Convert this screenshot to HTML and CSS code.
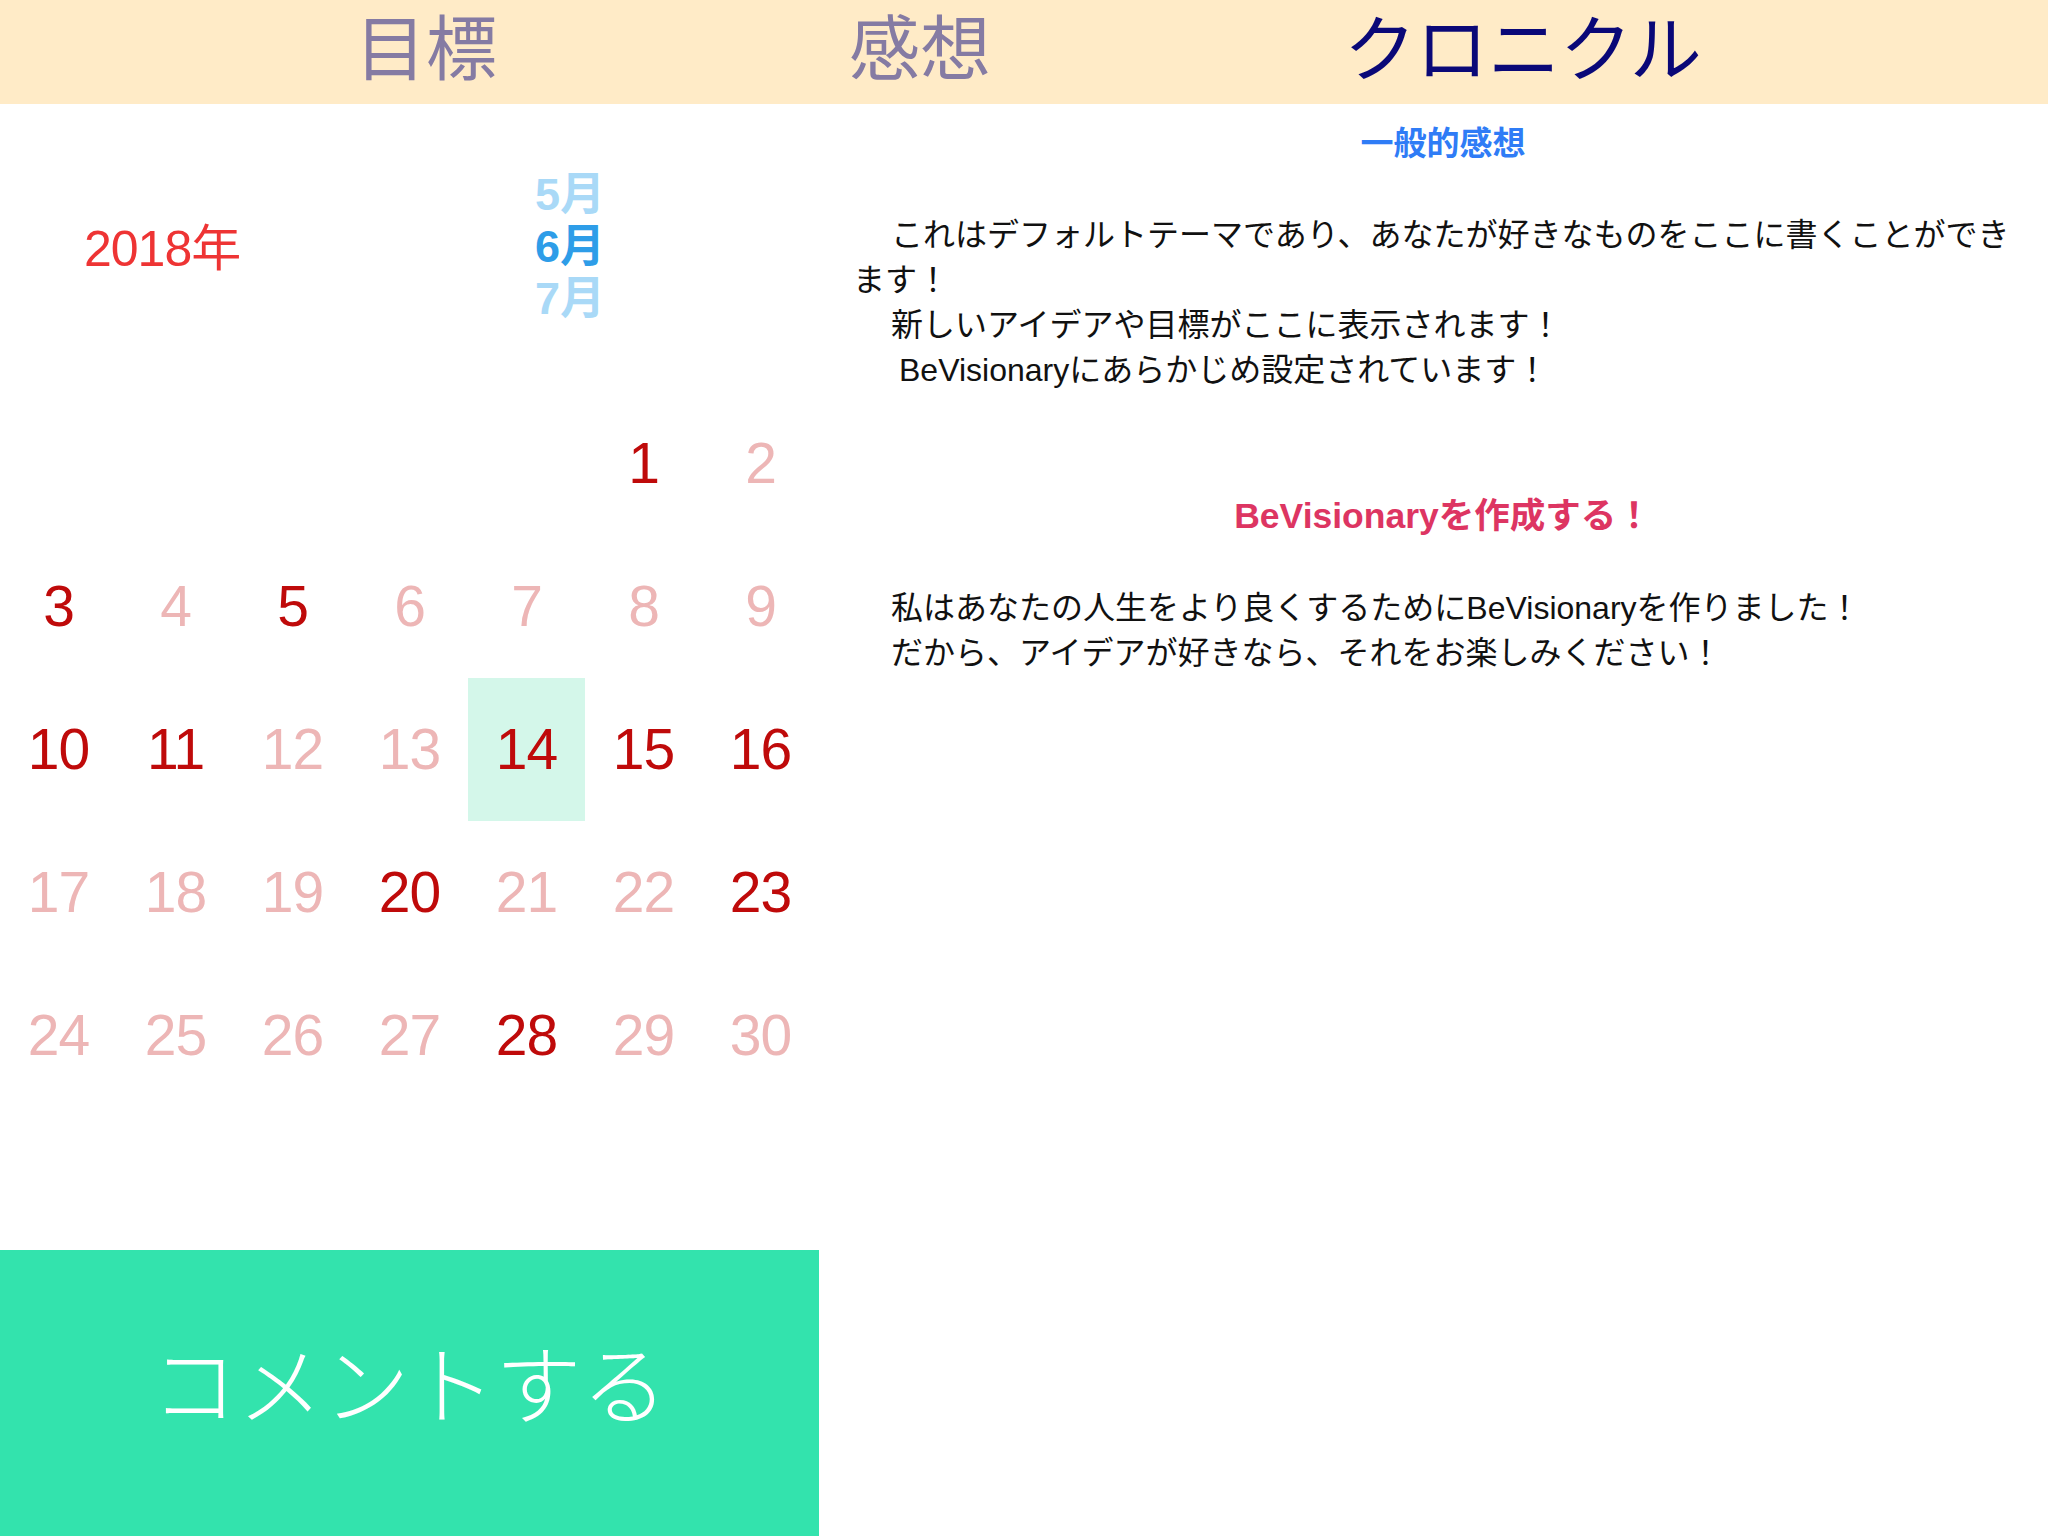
FILE: index.html
```html
<!DOCTYPE html>
<html lang="ja">
<head>
<meta charset="utf-8">
<title>BeVisionary</title>
<link rel="stylesheet" href="styles.css">
</head>
<body>
<div class="app">
  <header class="topbar">
    <div class="tab tab-goal">目標</div>
    <div class="tab tab-thought">感想</div>
    <div class="tab tab-chronicle active">クロニクル</div>
  </header>
  <main class="main">
    <section class="left">
      <div class="picker">
        <div class="year">2018年</div>
        <div class="months">
          <div class="month faded">5月</div>
          <div class="month current">6月</div>
          <div class="month faded">7月</div>
        </div>
      </div>
      <div class="calendar">
        <div class="day"></div>
        <div class="day"></div>
        <div class="day"></div>
        <div class="day"></div>
        <div class="day"></div>
        <div class="day on">1</div>
        <div class="day off">2</div>
        <div class="day on">3</div>
        <div class="day off">4</div>
        <div class="day on">5</div>
        <div class="day off">6</div>
        <div class="day off">7</div>
        <div class="day off">8</div>
        <div class="day off">9</div>
        <div class="day on">10</div>
        <div class="day on">11</div>
        <div class="day off">12</div>
        <div class="day off">13</div>
        <div class="day on today">14</div>
        <div class="day on">15</div>
        <div class="day on">16</div>
        <div class="day off">17</div>
        <div class="day off">18</div>
        <div class="day off">19</div>
        <div class="day on">20</div>
        <div class="day off">21</div>
        <div class="day off">22</div>
        <div class="day on">23</div>
        <div class="day off">24</div>
        <div class="day off">25</div>
        <div class="day off">26</div>
        <div class="day off">27</div>
        <div class="day on">28</div>
        <div class="day off">29</div>
        <div class="day off">30</div>
      </div>
      <button class="comment-btn">コメントする</button>
    </section>
    <section class="right">
      <h2 class="title-blue">一般的感想</h2>
      <div class="para first">
        <p class="line">これはデフォルトテーマであり、あなたが好きなものをここに書くことができます！</p>
        <p class="line">新しいアイデアや目標がここに表示されます！</p>
        <p class="line wide">BeVisionaryにあらかじめ設定されています！</p>
      </div>
      <h2 class="title-red">BeVisionaryを作成する！</h2>
      <div class="para second">
        <p class="line">私はあなたの人生をより良くするためにBeVisionaryを作りました！</p>
        <p class="line">だから、アイデアが好きなら、それをお楽しみください！</p>
      </div>
    </section>
  </main>
</div>
</body>
</html>
```

FILE: styles.css
```css
* {
  box-sizing: border-box;
}

html, body {
  margin: 0;
  padding: 0;
  background: #ffffff;
}

body {
  width: 2048px;
  height: 1536px;
  overflow: hidden;
  font-family: "Liberation Sans", "Noto Sans CJK JP", sans-serif;
}

.app {
  display: flex;
  flex-direction: column;
  height: 1536px;
}

.topbar {
  height: 104px;
  flex: 0 0 104px;
  background: #ffebc7;
  display: flex;
  align-items: flex-start;
  padding-top: 10px;
}

.tab {
  font-family: "Liberation Sans", "Noto Sans CJK JP", sans-serif;
  font-size: 71px;
  line-height: 80px;
  font-weight: 400;
  color: #857ba3;
  white-space: nowrap;
}

.tab-goal {
  margin-left: 355px;
}

.tab-thought {
  margin-left: 352px;
}

.tab-chronicle {
  margin-left: 353px;
  font-size: 72px;
}

.tab.active {
  color: #0a0878;
}

.main {
  flex: 1;
  display: flex;
}

.left {
  width: 819px;
  flex: 0 0 819px;
  display: flex;
  flex-direction: column;
}

.picker {
  height: 286px;
  display: flex;
  align-items: center;
}

.year {
  width: 535px;
  padding-left: 84px;
  padding-bottom: 6px;
  font-size: 50px;
  letter-spacing: -1px;
  color: #ee3434;
  white-space: nowrap;
}

.months {
  display: flex;
  flex-direction: column;
}

.month {
  font-size: 45px;
  line-height: 52px;
  font-weight: 700;
  white-space: nowrap;
}

.month.faded {
  color: #a9d9f7;
}

.month.current {
  color: #2e9de8;
}

.calendar {
  margin-top: 2px;
  display: grid;
  grid-template-columns: repeat(7, 117px);
  grid-auto-rows: 143px;
}

.day {
  display: flex;
  align-items: center;
  justify-content: center;
  font-size: 57px;
  letter-spacing: -1px;
  line-height: 1;
}

.day.on {
  color: #bf0a0a;
}

.day.off {
  color: #edb6b6;
}

.day.today {
  background: #d4f7ea;
}

.comment-btn {
  margin-top: auto;
  height: 286px;
  width: 819px;
  border: none;
  padding: 0 0 26px 0;
  background: #33e3ad;
  color: #ffffff;
  font-family: "Noto Sans CJK JP", sans-serif;
  font-size: 86px;
  font-weight: 300;
  cursor: pointer;
}

.right {
  flex: 1;
  padding: 15px 15px 0 34px;
  color: #111111;
}

.title-blue,
.title-red {
  margin: 0;
  text-align: center;
  font-weight: 700;
  line-height: 45px;
}

.title-blue {
  font-size: 33px;
  color: #2f7cf6;
  font-family: "Noto Sans CJK JP", sans-serif;
}

.title-red {
  font-size: 35.5px;
  color: #dd3562;
  margin-top: 101px;
}

.para {
  font-size: 32px;
  line-height: 45px;
}

.para.first {
  margin-top: 49px;
}

.para.second {
  margin-top: 47px;
}

.line {
  margin: 0;
  text-indent: 38px;
}

.line.wide {
  text-indent: 46px;
}
```
